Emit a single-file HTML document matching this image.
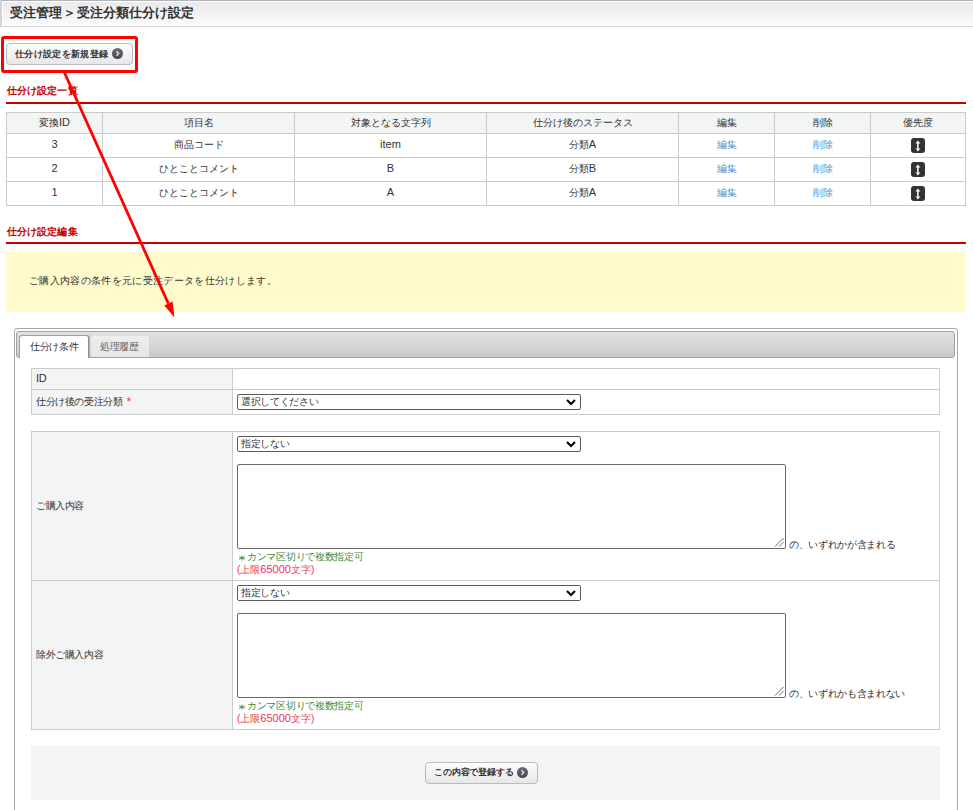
<!DOCTYPE html>
<html lang="ja"><head><meta charset="utf-8">
<style>
*{box-sizing:border-box;margin:0;padding:0}
html,body{width:973px;height:810px;overflow:hidden;background:#fff}
body{font-family:"Liberation Sans",sans-serif;font-size:10px;color:#333;position:relative}
.abs{position:absolute}
.hdr{left:0;top:0;width:973px;height:27px;border-top:1px solid #b2b2ba;border-bottom:1px solid #d6d6da;border-left:2px solid #d4d4d8;box-shadow:inset 1px 0 #fff;background:linear-gradient(#fff 0,#fff 1px,#eaeaea 1px,#fbfbfb 100%)}
.hdr span{position:absolute;left:8px;top:3px;font-size:13px;font-weight:bold;color:#333;white-space:nowrap;line-height:17px}
.btn{border:1px solid #b6b9c9;border-radius:4px;background:linear-gradient(#fdfdfd,#e7e7e7);white-space:nowrap;font-weight:bold;color:#333}
.circ{position:absolute;width:11px;height:11px;border-radius:50%;background:linear-gradient(#6c6d7a,#44454f)}
.circ svg{position:absolute;left:0;top:0}
.sec{left:7px;font-size:10px;font-weight:bold;color:#c40000;white-space:nowrap;line-height:12px;letter-spacing:0.1px}
.rline{left:6px;width:960px;height:2px;background:#c80000}
table{border-collapse:collapse;table-layout:fixed}
.t1{position:absolute;left:6px;top:112px;width:959px}
.t1 td,.t1 th{border:1px solid #cbcbcb;text-align:center;font-weight:normal;font-size:10px;color:#333;white-space:nowrap;padding:0}
.t1 th{background:#f3f4f4;height:21px}
.t1 td{height:24px;padding-bottom:2px}
.en{font-size:11px;line-height:10px}
.t1 td.lnk{color:#5a8fcb}
.prio{display:inline-block;width:14px;height:15px;border-radius:3px;background:#333;vertical-align:middle;position:relative;top:1px}
.yel{left:6px;top:252px;width:960px;height:60px;background:#fffbcc}
.yel span{position:absolute;left:23px;top:22px;white-space:nowrap;line-height:14px;letter-spacing:0.33px}
.panel{left:14px;top:328px;width:944px;height:500px;border:1px solid #a8a8a8;border-radius:3px}
.bar{left:16px;top:331px;width:939px;height:27px;border:1px solid #a2a2a2;border-radius:3px;background:linear-gradient(#e2e2e2,#c9c9c9)}
.tab1{left:19px;top:335px;width:70px;height:23px;background:#fff;border:1px solid #a2a2a2;border-bottom:none;border-radius:3px 3px 0 0;border-right:1px solid #8c8c8c;box-shadow:1px 0 0 #b8b8b8}
.tab1 span{position:absolute;left:10px;top:4px;white-space:nowrap;line-height:14px;color:#333;letter-spacing:-0.3px}
.tab2{left:91px;top:336px;width:58px;height:21px;background:linear-gradient(#ededed,#e6e6e6);border-radius:3px 3px 0 0}
.tab2 span{position:absolute;left:9px;top:4px;white-space:nowrap;line-height:14px;color:#666;letter-spacing:-0.3px}
.ft td{border:1px solid #cbcbcb;padding:0;white-space:nowrap;color:#333;font-size:10px}
.ft td.l{background:#f3f4f4;width:201px;padding-left:4px;letter-spacing:-0.38px}
.sel{position:absolute;height:16px;width:344px;border:1px solid #5a5a5a;border-radius:2px;background:#fff}
.sel span{position:absolute;left:3px;top:0px;line-height:14px;white-space:nowrap;color:#333;letter-spacing:-0.35px}
.sel svg{position:absolute;right:4px;top:4px}
.ta{position:absolute;width:549px;height:85px;border:1px solid #6a6a6a;border-radius:2px;background:#fff}
.ta svg{position:absolute;right:1px;bottom:1px}
.g{position:absolute;color:#3d8a3d;white-space:nowrap;line-height:12px;letter-spacing:-0.3px}
.r{position:absolute;color:#f0304a;white-space:nowrap;line-height:12px}
.suf{position:absolute;white-space:nowrap;line-height:12px;color:#333;letter-spacing:-0.33px}
.foot{left:31px;top:746px;width:909px;height:54px;background:#f4f4f4}
</style></head><body>

<div class="abs hdr"><span>受注管理<b style="font-weight:bold;margin:0 1px 0 0.5px">＞</b>受注分類仕分け設定</span></div>

<div class="abs btn" style="left:6px;top:43px;width:127px;height:22px;font-size:9px;letter-spacing:0.35px">
  <span style="position:absolute;left:8px;top:4px;line-height:12px">仕分け設定を新規登録</span>
  <div class="circ" style="left:105px;top:4px"><svg width="11" height="11" viewBox="0 0 11 11"><path d="M4.5 3.3 L6.7 5.5 L4.5 7.7" fill="none" stroke="#e6e6ec" stroke-width="1.35"/></svg></div>
</div>
<div class="abs" style="left:1px;top:36px;width:137px;height:37px;border:3px solid #ff0000;border-radius:3px"></div>

<div class="abs sec" style="top:85px">仕分け設定一覧</div>
<div class="abs rline" style="top:102px"></div>

<table class="t1">
<colgroup><col style="width:96px"><col style="width:192px"><col style="width:192px"><col style="width:192px"><col style="width:96px"><col style="width:96px"><col style="width:95px"></colgroup>
<tr><th>変換<span class="en">ID</span></th><th>項目名</th><th>対象となる文字列</th><th>仕分け後のステータス</th><th>編集</th><th>削除</th><th>優先度</th></tr>
<tr><td><span class="en">3</span></td><td>商品コード</td><td><span class="en">item</span></td><td>分類<span class="en">A</span></td><td class="lnk">編集</td><td class="lnk">削除</td><td><span class="prio"><svg width="14" height="15" viewBox="0 0 14 15" style="position:absolute;left:0;top:0"><path d="M6.9 2.6 L9.3 5.4 L7.65 5.4 L7.65 10.6 L9.3 10.6 L6.9 13.6 L4.5 10.6 L6.15 10.6 L6.15 5.4 L4.5 5.4 Z" fill="#fff"/></svg></span></td></tr>
<tr><td><span class="en">2</span></td><td>ひとことコメント</td><td><span class="en">B</span></td><td>分類<span class="en">B</span></td><td class="lnk">編集</td><td class="lnk">削除</td><td><span class="prio"><svg width="14" height="15" viewBox="0 0 14 15" style="position:absolute;left:0;top:0"><path d="M6.9 2.6 L9.3 5.4 L7.65 5.4 L7.65 10.6 L9.3 10.6 L6.9 13.6 L4.5 10.6 L6.15 10.6 L6.15 5.4 L4.5 5.4 Z" fill="#fff"/></svg></span></td></tr>
<tr><td><span class="en">1</span></td><td>ひとことコメント</td><td><span class="en">A</span></td><td>分類<span class="en">A</span></td><td class="lnk">編集</td><td class="lnk">削除</td><td><span class="prio"><svg width="14" height="15" viewBox="0 0 14 15" style="position:absolute;left:0;top:0"><path d="M6.9 2.6 L9.3 5.4 L7.65 5.4 L7.65 10.6 L9.3 10.6 L6.9 13.6 L4.5 10.6 L6.15 10.6 L6.15 5.4 L4.5 5.4 Z" fill="#fff"/></svg></span></td></tr>
</table>

<div class="abs sec" style="top:226px">仕分け設定編集</div>
<div class="abs rline" style="top:242px"></div>

<div class="abs yel"><span>ご購入内容の条件を元に受注データを仕分けします。</span></div>

<div class="abs panel"></div>
<div class="abs bar"></div>
<div class="abs tab2"><span>処理履歴</span></div>
<div class="abs tab1"><span>仕分け条件</span></div>

<table class="ft" style="position:absolute;left:31px;top:368px;width:909px">
<tr><td class="l" style="height:21px"><span class="en" style="position:relative;top:-1px">ID</span></td><td style="height:21px"></td></tr>
<tr><td class="l" style="height:25px">仕分け後の受注分類<span style="color:#f04050;font-size:12px;line-height:0;margin-left:4px;position:relative;top:1px">*</span></td><td style="height:25px"></td></tr>
</table>

<table class="ft" style="position:absolute;left:31px;top:431px;width:909px">
<tr><td class="l" style="height:149px">ご購入内容</td><td style="height:149px"></td></tr>
<tr><td class="l" style="height:149px">除外ご購入内容</td><td style="height:149px"></td></tr>
</table>

<div class="sel" style="left:237px;top:394px"><span>選択してください</span><svg width="10" height="7" viewBox="0 0 10 7"><path d="M1 1 L5 5 L9 1" fill="none" stroke="#000" stroke-width="2"/></svg></div>

<div class="sel" style="left:237px;top:436px"><span>指定しない</span><svg width="10" height="7" viewBox="0 0 10 7"><path d="M1 1 L5 5 L9 1" fill="none" stroke="#000" stroke-width="2"/></svg></div>
<div class="ta" style="left:237px;top:464px"><svg width="10" height="10" viewBox="0 0 10 10"><path d="M9.5 1 L1 9.5 M9.5 5 L5 9.5" stroke="#666" stroke-width="1"/></svg></div>
<div class="suf" style="left:789px;top:539px">の、いずれかが含まれる</div>
<div class="g" style="left:237px;top:551px"><svg width="10" height="10" viewBox="0 0 10 10" style="vertical-align:-2px;position:relative;top:1px"><path d="M5 2.4 V7.6 M2.1 3.7 L7.9 6.3 M2.1 6.3 L7.9 3.7" stroke="#3d8a3d" stroke-width="0.9"/></svg>カンマ区切りで複数指定可</div>
<div class="r" style="left:237px;top:564px">(上限<span class="en">65000</span>文字)</div>

<div class="sel" style="left:237px;top:585px"><span>指定しない</span><svg width="10" height="7" viewBox="0 0 10 7"><path d="M1 1 L5 5 L9 1" fill="none" stroke="#000" stroke-width="2"/></svg></div>
<div class="ta" style="left:237px;top:613px"><svg width="10" height="10" viewBox="0 0 10 10"><path d="M9.5 1 L1 9.5 M9.5 5 L5 9.5" stroke="#666" stroke-width="1"/></svg></div>
<div class="suf" style="left:789px;top:688px">の、いずれかも含まれない</div>
<div class="g" style="left:237px;top:700px"><svg width="10" height="10" viewBox="0 0 10 10" style="vertical-align:-2px;position:relative;top:1px"><path d="M5 2.4 V7.6 M2.1 3.7 L7.9 6.3 M2.1 6.3 L7.9 3.7" stroke="#3d8a3d" stroke-width="0.9"/></svg>カンマ区切りで複数指定可</div>
<div class="r" style="left:237px;top:713px">(上限<span class="en">65000</span>文字)</div>

<div class="abs foot"></div>
<div class="abs btn" style="left:425px;top:762px;width:113px;height:22px;font-size:9px;letter-spacing:-0.15px">
  <span style="position:absolute;left:8px;top:3px;line-height:12px">この内容で登録する</span>
  <div class="circ" style="left:91px;top:4px"><svg width="11" height="11" viewBox="0 0 11 11"><path d="M4.5 3.3 L6.7 5.5 L4.5 7.7" fill="none" stroke="#e6e6ec" stroke-width="1.35"/></svg></div>
</div>

<svg class="abs" style="left:0;top:0" width="973" height="810" viewBox="0 0 973 810">
  <line x1="64.2" y1="72" x2="168.3" y2="303.5" stroke="#ff0000" stroke-width="2.8"/>
  <path d="M174.4 317.3 L164.3 305.4 L172.6 301.5 Z" fill="#ff0000"/>
</svg>

</body></html>
